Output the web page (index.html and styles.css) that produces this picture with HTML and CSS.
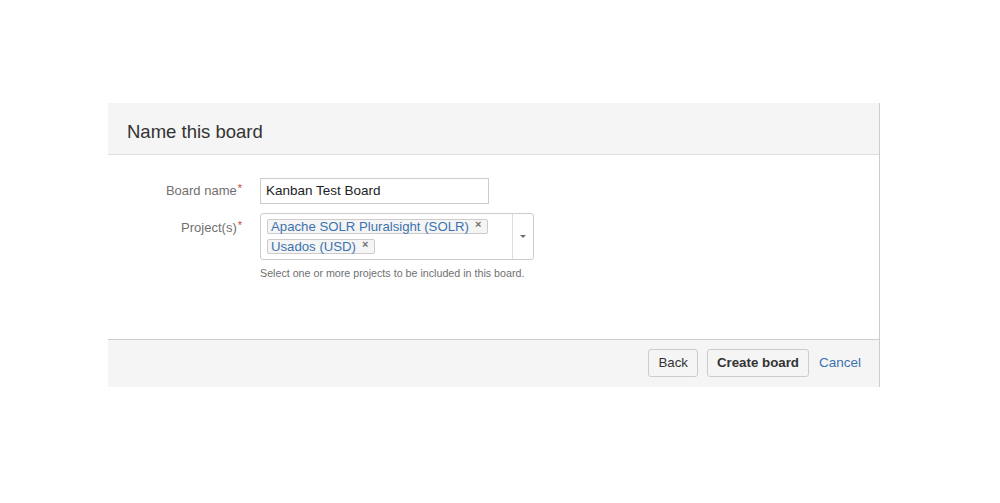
FILE: index.html
```html
<!DOCTYPE html>
<html>
<head>
<meta charset="utf-8">
<link rel="stylesheet" href="styles.css">
</head>
<body>
<div class="dialog">
  <div class="dialog-header"><h2 class="dialog-title">Name this board</h2></div>
  <div class="dialog-body">
    <div class="form">
      <div class="label">Board name<span class="req">*</span></div>
      <div class="field"><div class="text-input">Kanban Test Board</div></div>
      <div class="label label-top">Project(s)<span class="req">*</span></div>
      <div class="field">
        <div class="multi">
          <div class="tags">
            <span class="tag">Apache SOLR Pluralsight (SOLR)<span class="x">×</span></span>
            <span class="tag">Usados (USD)<span class="x">×</span></span>
          </div>
          <div class="drop"><span class="arrow"></span></div>
        </div>
        <div class="help">Select one or more projects to be included in this board.</div>
      </div>
    </div>
  </div>
  <div class="dialog-footer">
    <button class="btn">Back</button>
    <button class="btn btn-strong">Create board</button>
    <a class="link">Cancel</a>
  </div>
</div>
</body>
</html>
```
FILE: styles.css
```css
html, body { margin: 0; padding: 0; background: #fff; }
body { font-family: "Liberation Sans", Arial, sans-serif; font-size: 13px; color: #333; }
.dialog {
  margin: 103px 0 0 108px;
  width: 771px;
  border-right: 1px solid #ccc;
  background: #fff;
}
.dialog-header {
  box-sizing: border-box;
  height: 52px;
  background: #f5f5f5;
  border-bottom: 1px solid #ddd;
  display: flex;
  align-items: center;
  padding: 6px 19px 0;
}
.dialog-title { margin: 0; font-weight: normal; font-size: 18.5px; color: #333; }
.dialog-body { height: 161px; padding-top: 23px; }
.form {
  display: grid;
  grid-template-columns: 134px 1fr;
  column-gap: 18px;
  row-gap: 9px;
}
.label { color: #707070; text-align: right; line-height: 26px; }
.label-top { line-height: 15px; padding-top: 7px; }
.req { color: #d04437; font-size: 11px; vertical-align: top; position: relative; top: -3px; margin-left: 1px; }
.label-top .req { top: -2px; }
.text-input {
  box-sizing: border-box;
  width: 229px; height: 26px;
  border: 1px solid #ccc;
  padding: 0 5px;
  line-height: 24px;
  font-size: 13.5px;
  color: #222;
}
.multi {
  box-sizing: border-box;
  width: 274px; height: 47px;
  border: 1px solid #ccc;
  border-radius: 3px;
  display: flex;
}
.tags {
  flex: 1;
  padding: 5px 0 0 6px;
  display: flex; flex-direction: column; align-items: flex-start; gap: 5px;
}
.tag {
  box-sizing: border-box;
  height: 15px;
  border: 1px solid #ccc;
  border-radius: 2px;
  background: #f5f5f5;
  color: #3b73af;
  padding: 0 6px 0 3px;
  line-height: 13px;
  font-size: 13.2px;
  display: inline-flex; align-items: center;
}
.x { color: #707070; font-size: 11px; font-weight: bold; margin-left: 6px; position: relative; top: -2px; }
.drop {
  width: 20px;
  border-left: 1px solid #ddd;
  display: flex; align-items: center; justify-content: center;
}
.arrow {
  width: 0; height: 0;
  border-left: 3px solid transparent; border-right: 3px solid transparent;
  border-top: 3px solid #707070;
}
.help { margin-top: 7px; font-size: 10.7px; color: #707070; }
.dialog-footer {
  height: 45px;
  background: #f5f5f5;
  border-top: 1px solid #ccc;
  display: flex; align-items: center; justify-content: flex-end;
  padding: 0 18px 2px;
  gap: 9px;
}
.btn {
  font-family: inherit; font-size: 13.3px; color: #333;
  height: 28px;
  padding: 0 9px;
  background: #f5f5f5;
  border: 1px solid #ccc;
  border-radius: 3px;
}
.btn-strong { font-weight: bold; }
.link { color: #3b73af; margin-left: 1px; font-size: 13.5px; }
```
